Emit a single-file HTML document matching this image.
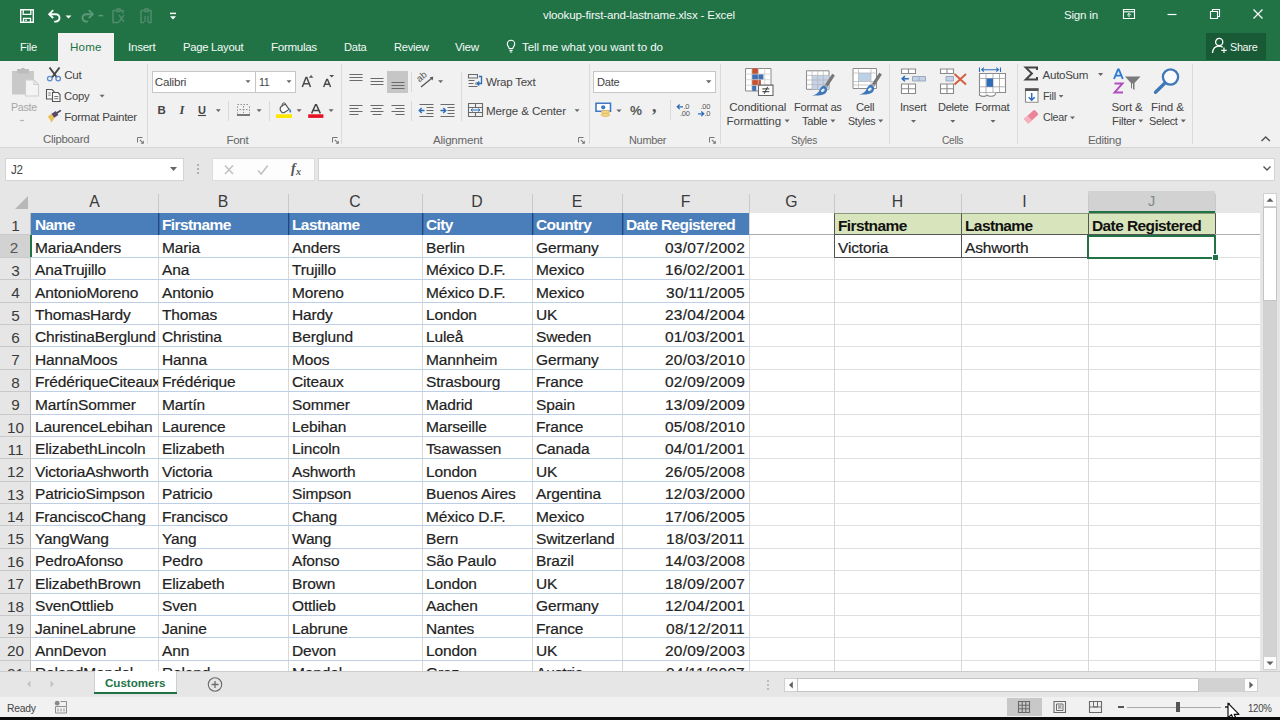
<!DOCTYPE html>
<html><head><meta charset="utf-8"><title>Excel</title>
<style>
*{box-sizing:border-box;margin:0;padding:0}
html,body{width:1280px;height:720px;overflow:hidden;background:#e6e6e6;font-family:"Liberation Sans",sans-serif;}
.abs,#app div,#app svg,#app span.a{position:absolute}
#app{position:absolute;left:0;top:0;width:1280px;height:720px;overflow:hidden}
/* title */
#green{left:0;top:0;width:1280px;height:61px;background:#217346}
.tt.hm{color:#217346}
.tt{color:#f4f9f6;font-size:11.6px;white-space:nowrap;line-height:14px}
#hometab{left:58px;top:33px;width:56px;height:29px;background:#f1f1f1}
#share{left:1206px;top:33px;width:60px;height:27px;background:#185a36}
/* ribbon */
#ribbon{left:0;top:61px;width:1280px;height:86px;background:#f1f1f1}
#ribline{left:0;top:147px;width:1280px;height:1px;background:#d6d6d6}
.rt{color:#444;font-size:11.6px;white-space:nowrap;line-height:14px}
.rt.dis{color:#a6a6a6}
.rt.j2{font-size:12.3px}
.gl{color:#666;font-size:11.6px;white-space:nowrap;line-height:14px}
.gsep{top:64px;width:1px;height:80px;background:#dadada}
.box{background:#fff;border:1px solid #c6c6c6}
/* formula bar */
#fbar{left:0;top:148px;width:1280px;height:43px;background:#e6e6e6}
/* grid */
#sheet{left:0;top:191px;width:1260px;height:480px;background:#fff;overflow:hidden}
#gridwrap{left:0;top:0;width:1280px;height:671px;overflow:hidden}
#colhdr{left:0;top:191px;width:1260px;height:22px;background:#e6e6e6}
#rowhdr{left:0;top:213px;width:31px;height:458px;background:#e6e6e6}
.ch{top:191px;height:22px;line-height:21.5px;text-align:center;font-size:15.8px;color:#3a3a3a}
.ch.sel{background:#d2d2d2;color:#7d8b84;font-size:14.5px;border-bottom:2px solid #217346}
.chsep{top:194px;width:1px;height:19px;background:#c9c9c9}
.rh{left:0;width:31px;text-align:center;font-size:15.3px;color:#3a3a3a}
.rh.sel{background:#d2d2d2;color:#555;border-right:2px solid #217346;width:32px;padding-right:2px}
.rhsep{left:0;width:31px;height:1px;background:#c9c9c9}
.hl{left:31px;width:1229px;height:1px;background:#dfdfdf}
.vl{top:213px;width:1px;height:458px;background:#d8d8d8}
.tl{height:1px;background:#bdcfe6}
.bluehdr{background:#4a7ebb}
.bsep{width:1px;background:#1f4680;box-shadow:1px 0 0 rgba(31,70,128,.35)}
.c{font-size:15.5px;color:#222;white-space:nowrap;overflow:hidden;padding-left:4px;padding-right:3px;letter-spacing:-.15px;padding-top:.5px;-webkit-text-stroke:.2px #222}
.c.r{text-align:right;letter-spacing:.25px;padding-right:4px}
.c.hb{color:#fff;-webkit-text-stroke:0;font-weight:bold;letter-spacing:-.6px;padding-top:0}
.c.gh{background:#d8e4bc;-webkit-text-stroke:0;font-weight:bold;color:#111;border:1px solid #555;border-top-color:#8a9a7c;letter-spacing:-.6px;padding-top:0;padding-left:3px}
/* bottom */
#tabbar{left:0;top:671px;width:1280px;height:26px;background:#e6e6e6;border-top:1px solid #cdcdcd}
#status{left:0;top:697px;width:1280px;height:20px;background:#f1f1f1}
.stab{color:#217346;font-weight:bold;font-size:11.6px;white-space:nowrap;line-height:14px}
.st{color:#444;font-size:10.7px;white-space:nowrap;line-height:14px}
#black{left:0;top:717px;width:1280px;height:3px;background:#0a0a0a}
</style></head><body>
<div id="app">
<div id="green"></div>
<div id="hometab"></div>
<div id="share"></div>

<!-- TITLE BAR -->
<svg style="left:18px;top:7px" width="170" height="18" viewBox="0 0 170 18" fill="none" stroke="#fff" stroke-width="1.4">
 <!-- save -->
 <path d="M2.7 2.7h12.6v12.6h-12.6z"/><path d="M5.2 2.7v4.6h7.6v-4.6" stroke-width="1.3"/><path d="M5.5 15.3v-4h7v4" stroke-width="1.3"/><path d="M7.2 13.2h1.6" stroke-width="1.6"/>
 <!-- undo -->
 <path d="M31.5 7.2h6.3a3.6 3.6 0 0 1 0 7.4h-1.6" stroke-width="1.9"/><path d="M35.2 3.2l-4 4 4 4" stroke-width="1.9"/>
 <path d="M47.5 8.4h6l-3 3z" fill="#fff" stroke="none"/>
 <!-- redo dim -->
 <g stroke="#5d9a79"><path d="M74.5 7.2h-6.3a3.6 3.6 0 0 0 0 7.4h1.6" stroke-width="1.9"/><path d="M70.8 3.2l4 4-4 4" stroke-width="1.9"/></g>
 <path d="M80.5 8.6h4.6" stroke="#5d9a79" stroke-width="1.5"/>
 <!-- dim icons -->
 <g stroke="#4f8d6c" stroke-width="1.5"><path d="M95 3.5h3m4 0h3v3M95 3.5v12h6"/><path d="M99 2h3v2.4h-3z"/><path d="M101 8l5 7m0-7l-5 7" stroke-width="1.3"/>
 <path d="M123 3.5h3m4 0h3v12h-3M123 3.5v12h3"/><path d="M127 2h3v2.4h-3z"/><path d="M127 9v6m3-6v6" stroke-width="1.3"/></g>
 <!-- customize -->
 <path d="M152 6.4h6" stroke-width="1.5"/><path d="M152 9.2h6l-3 3.2z" fill="#fff" stroke="none"/>
</svg>
<div class="tt" style="left:543px;top:8px;letter-spacing:-0.17px">vlookup-first-and-lastname.xlsx - Excel</div>
<div class="tt" style="left:1064px;top:8px;letter-spacing:-0.22px">Sign in</div>
<svg style="left:1120px;top:5px" width="150" height="18" viewBox="0 0 150 18" fill="none" stroke="#fff" stroke-width="1.1">
 <path d="M3.5 4.5h11v9h-11z"/><path d="M3.5 6.8h11" /><path d="M9 12.2v-3.6m-1.8 1.6l1.8-1.8 1.8 1.8" stroke-width="1"/>
 <path d="M47.5 9.5h9" stroke-width="1.2"/>
 <path d="M90.5 6.5h7v7h-7z"/><path d="M92.5 6.5v-2h7v7h-2"/>
 <path d="M133.5 4.5l9 9m0-9l-9 9" stroke-width="1.2"/>
</svg>
<!-- TABS -->
<div class="tt" style="left:20px;top:39.5px;letter-spacing:-0.30px;transform:scaleX(0.963);transform-origin:0 0">File</div>
<div class="tt hm" style="left:70px;top:39.5px;letter-spacing:0.16px">Home</div>
<div class="tt" style="left:128px;top:39.5px;letter-spacing:-0.27px">Insert</div>
<div class="tt" style="left:183px;top:39.5px;letter-spacing:-0.27px;transform:scaleX(0.971);transform-origin:0 0">Page Layout</div>
<div class="tt" style="left:271px;top:39.5px;letter-spacing:-0.31px">Formulas</div>
<div class="tt" style="left:344px;top:39.5px;letter-spacing:-0.30px;transform:scaleX(0.959);transform-origin:0 0">Data</div>
<div class="tt" style="left:393.5px;top:39.5px;letter-spacing:-0.28px;transform:scaleX(0.960);transform-origin:0 0">Review</div>
<div class="tt" style="left:455px;top:39.5px;letter-spacing:-0.26px">View</div>
<svg style="left:505px;top:38px" width="12" height="16" viewBox="0 0 12 16" fill="none" stroke="#fff" stroke-width="1.1"><path d="M4.2 10.5c0-1.6-1.9-2.4-1.9-4.6a3.7 3.7 0 0 1 7.4 0c0 2.2-1.9 3-1.9 4.6z"/><path d="M4.4 12.4h3.2M4.8 14h2.4"/></svg>
<div class="tt" style="left:522px;top:39.5px;letter-spacing:-0.08px">Tell me what you want to do</div>
<svg style="left:1211px;top:36px" width="18" height="18" viewBox="0 0 18 18" fill="none" stroke="#fff" stroke-width="1.300"><circle cx="8.200" cy="6" r="3.600"/><path d="M1.500 17c.4-4.400 2.800-6.800 6.500-6.800 1.500 0 2.700.4 3.700 1.100"/><path d="M13 11.500v5.500m-2.700-2.700h5.400" stroke-width="1.200"/></svg>
<div class="tt" style="left:1230px;top:39.5px;letter-spacing:-0.30px;transform:scaleX(0.929);transform-origin:0 0">Share</div>
<div id="ribbon"></div>
<div id="ribline"></div>
<!-- CLIPBOARD -->
<svg style="left:8px;top:64px" width="140" height="82" viewBox="0 0 140 82" fill="none">
 <!-- paste (disabled) -->
 <path d="M4 7h22v23.5h-22z" fill="#c9c9c9"/><path d="M9 7v-2h4a2.2 2.2 0 0 1 4 0h4v2v2.5h-12z" fill="#bdbdbd"/>
 <path d="M17.5 16h8.5l4.5 4.5v11.5h-13z" fill="#f4f4f4" stroke="#cfcfcf" stroke-width="1.1"/><path d="M26 16v4.5h4.5" stroke="#cfcfcf" stroke-width="1.1"/>
 <path d="M12 56.5h4" stroke="#b5b5b5" stroke-width="1.2"/>
 <!-- cut -->
 <path d="M41.500 3.500l7.500 10M51.500 3.500l-7.500 10" stroke="#444" stroke-width="1.900"/>
 <circle cx="41.8" cy="14.6" r="2.300" stroke="#5b8bd0" stroke-width="1.300"/><circle cx="50.2" cy="14.6" r="2.300" stroke="#5b8bd0" stroke-width="1.300"/>
 <!-- copy -->
 <path d="M38.5 25.5h5.5l2 2v7.5h-7.5z" stroke="#555" stroke-width="1.1" fill="#f8f8f8"/>
 <path d="M44.5 28.5h5.5l2 2v7h-7.5z" stroke="#555" stroke-width="1.1" fill="#f8f8f8"/>
 <path d="M46.3 32.5h4M46.3 34.7h4M40.3 29h2.4M40.3 31.2h2.4" stroke="#777" stroke-width="1"/>
 <path d="M91.6 30.8h5l-2.5 2.8z" fill="#666"/>
 <!-- format painter -->
 <path d="M47.6 48.8l4.8-3 0.9 1.3-4.8 3.1z" fill="#4b4156"/>
 <path d="M43.2 50l4.6-2.9 2.6 3.9-4.5 3z" fill="#56496a"/>
 <path d="M39.8 52.2l3.8-2.4 2.8 4.4-2.9 4.4z" fill="#e8c35a"/>
 <!-- launcher -->
 <path d="M129.5 78.5v-5h5" stroke="#777" stroke-width="1"/><path d="M131.8 75.8l3.4 3.4" stroke="#777" stroke-width="1.1"/><path d="M135.8 76.6v3.2h-3.2z" fill="#777"/>
</svg>
<div class="rt dis" style="left:10.6px;top:99.6px;letter-spacing:-0.30px;transform:scaleX(0.919);transform-origin:0 0">Paste</div>
<div class="rt" style="left:64.3px;top:67.7px;letter-spacing:-0.34px">Cut</div>
<div class="rt" style="left:64.3px;top:89px;letter-spacing:-0.29px;transform:scaleX(0.975);transform-origin:0 0">Copy</div>
<div class="rt" style="left:64.3px;top:110.2px;letter-spacing:-0.30px">Format Painter</div>
<div class="gl" style="left:43px;top:132.1px;letter-spacing:-0.27px;transform:scaleX(0.980);transform-origin:0 0">Clipboard</div>
<div class="gsep" style="left:147px"></div>

<!-- FONT -->
<div class="box" style="left:152px;top:71px;width:104px;height:22px"></div>
<div class="box" style="left:255px;top:71px;width:41px;height:22px"></div>
<div class="rt" style="left:154.8px;top:75px;letter-spacing:-0.21px">Calibri</div>
<div class="rt" style="left:259px;top:75px;letter-spacing:-0.37px;transform:scaleX(0.913);transform-origin:0 0">11</div>
<svg style="left:150px;top:64px" width="192" height="82" viewBox="0 0 192 82" fill="none">
 <path d="M95.5 16.3h5l-2.5 2.8z" fill="#666"/><path d="M136.5 16.3h5l-2.5 2.8z" fill="#666"/>
 <!-- grow / shrink font -->
 <path d="M152.300 23l3.700-9.400h.800l3.700 9.400M153.700 19.800h5.800" stroke="#4a4a4a" stroke-width="1.500"/><path d="M158.800 13.700l2.300-2.600 2.300 2.600z" fill="#555"/>
 <path d="M173.600 23l3.100-7.600h.800l3.100 7.600M174.800 20.300h4.800" stroke="#4a4a4a" stroke-width="1.400"/><path d="M179.200 10.900h5l-2.500 2.700z" fill="#555"/>
 <!-- U underline + arrows -->
 <path d="M48 51.500h8" stroke="#444" stroke-width="1.100"/>
 <path d="M65.800 45.300h5l-2.500 2.800z" fill="#666"/>
 <path d="M78.500 37v20" stroke="#dadada"/>
 <!-- borders icon -->
 <path d="M87.500 40.500h1.500m1.500 0h1.500m1.500 0h1.500m1.500 0h1.500M87.500 42.500v1.500m0 1.500v1.500m0 1.500v1M99.500 42.500v1.500m0 1.500v1.500m0 1.500v1M93.500 42v1.500m0 1.500v1.500m0 1.500v1M89.500 45.500h1.500m1.500 0h2m1.500 0h1.500" stroke="#8f8f8f" stroke-width="1"/>
 <path d="M87 51h13" stroke="#444" stroke-width="1.400"/>
 <path d="M106.600 45.300h5l-2.500 2.800z" fill="#666"/>
 <path d="M119.500 37v20" stroke="#dadada"/>
 <!-- fill color -->
 <path d="M131 42.600l4.300-2.500 3.800 5.300-4.400 2.900c-1.400.9-2.900.2-3.700-.9-.9-1.300-.9-3.700 0-4.800z" stroke="#555" stroke-width="1.100" fill="#fafafa"/>
 <path d="M132.400 42.400c-.6-2 0-3.300 1.200-3.500 1.100-.2 1.900.8 2.100 1.900" stroke="#555" stroke-width="1"/>
 <path d="M139.300 44.300c1.200 1 2.100 2.500 1.900 3.700-.2.800-1.500.8-1.700 0-.2-1.200 0-2.500-.2-3.700z" fill="#3f78c4"/>
 <path d="M126 50.300h16v3.700h-16z" fill="#ffe800"/>
 <path d="M146.600 45.300h5l-2.500 2.800z" fill="#666"/>
 <!-- font color -->
 <path d="M161.600 49.400l3.900-8.600h.9l3.900 8.600M163 46.400h6" stroke="#444" stroke-width="1.500"/>
 <path d="M158.200 50.300h15.200v3.600h-15.200z" fill="#e81123"/>
 <path d="M178.600 45.300h5l-2.500 2.800z" fill="#666"/>
 <!-- launcher -->
 <path d="M182.500 78.500v-5h5" stroke="#777" stroke-width="1"/><path d="M184.800 75.800l3.400 3.400" stroke="#777" stroke-width="1.100"/><path d="M188.800 76.600v3.200h-3.200z" fill="#777"/>
</svg>
<div class="rt" style="left:157.500px;top:103.200px;font-weight:bold;font-size:11.500px">B</div>
<div class="rt" style="left:179.500px;top:103px;font:italic bold 12.500px 'Liberation Serif',serif;line-height:14px">I</div>
<div class="rt" style="left:198px;top:102.700px;font-weight:bold;font-size:11px">U</div>
<div class="gl" style="left:226.500px;top:132.500px;letter-spacing:-0.34px">Font</div>
<div class="gsep" style="left:341px"></div>

<!-- ALIGNMENT -->
<div style="left:387px;top:71px;width:21px;height:22px;background:#c6c6c6"></div>
<svg style="left:345px;top:64px" width="244" height="82" viewBox="0 0 244 82" fill="none" stroke="#6a6a6a" stroke-width="1.100">
 <!-- vertical align -->
 <path d="M4.500 10.500h13M4.500 13.500h13M4.500 16.500h13"/>
 <path d="M25.500 14.500h13M25.500 17.500h13M25.500 20.500h13"/>
 <path d="M46.500 18.500h13M46.500 21.500h13M46.500 24.500h13"/>
 <path d="M66.500 8v20" stroke="#dadada"/>
 <!-- orientation -->
 <path d="M76 23l10.500-8.500" stroke="#555" stroke-width="1.300"/><path d="M88.300 12.800l-.7 3.800-2.900-3.300z" fill="#555" stroke="none"/>
 <text x="0" y="0" transform="translate(74.500 18.500) rotate(-40)" font-family="Liberation Sans" font-size="9.500" fill="#555" stroke="none">ab</text>
 <path d="M93.100 16.300h5l-2.500 2.800z" fill="#666" stroke="none"/>
 <!-- horizontal align -->
 <path d="M4.500 41.500h13M4.500 44.500h9M4.500 47.500h13M4.500 50.500h9"/>
 <path d="M25.500 41.500h13M27.500 44.500h9M25.500 47.500h13M27.500 50.500h9"/>
 <path d="M46.500 41.500h13M50.500 44.500h9M46.500 47.500h13M50.500 50.500h9"/>
 <path d="M66.500 37v20" stroke="#dadada"/>
 <!-- indent -->
 <path d="M74.500 40.500h14M81.500 43.500h7M81.500 46.500h7M81.500 49.500h7M74.500 52.500h14"/>
 <path d="M79.500 46.500h-5m2.200-2.400l-2.400 2.400 2.400 2.400" stroke="#2b6cb8" stroke-width="1.400"/>
 <path d="M95.500 40.500h14M102.500 43.500h7M102.500 46.500h7M102.500 49.500h7M95.500 52.500h14"/>
 <path d="M95.500 46.500h5m-2.200-2.400l2.400 2.400-2.400 2.400" stroke="#2b6cb8" stroke-width="1.400"/>
 <path d="M116.500 8v49" stroke="#dadada"/>
 <!-- wrap text -->
 <path d="M123.500 10.500h9v3.500h-9zM123.500 16.500h6M123.500 19.500h5M123.500 22.500h9"/>
 <path d="M134 12.500h2.500v7h-4m1.800-2l-2 2 2 2" stroke="#2b6cb8" stroke-width="1.300"/>
 <text x="130" y="21" font-family="Liberation Sans" font-size="6" fill="#555" stroke="none">c</text>
 <!-- merge & center -->
 <path d="M123.500 39.500h14v13h-14zM123.500 43.500h14M123.500 48.500h14M130.500 39.500v4M130.500 48.500v4"/>
 <path d="M126 46h9m-7.300-1.500l-1.700 1.500 1.700 1.500m5.600-3l1.700 1.500-1.700 1.500" stroke="#2b6cb8" stroke-width="1"/>
 <path d="M229.600 45.300h5l-2.500 2.800z" fill="#666" stroke="none"/>
 <!-- launcher -->
 <path d="M233.500 78.500v-5h5" stroke="#777" stroke-width="1"/><path d="M235.800 75.800l3.400 3.400" stroke="#777" stroke-width="1.100"/><path d="M239.800 76.600v3.200h-3.200z" fill="#777" stroke="none"/>
</svg>
<div class="rt" style="left:486px;top:75px;letter-spacing:-0.27px">Wrap Text</div>
<div class="rt" style="left:486px;top:104px;letter-spacing:-0.14px">Merge &amp; Center</div>
<div class="gl" style="left:433px;top:132.500px;letter-spacing:-0.24px">Alignment</div>
<div class="gsep" style="left:589px"></div>

<!-- NUMBER -->
<div class="box" style="left:593px;top:71px;width:123px;height:22px"></div>
<div class="rt" style="left:596.5px;top:75px;letter-spacing:-0.30px;transform:scaleX(0.959);transform-origin:0 0">Date</div>
<svg style="left:590px;top:64px" width="132" height="82" viewBox="0 0 132 82" fill="none">
 <path d="M116 16.300h5.400l-2.700 3z" fill="#666"/>
 <!-- accounting format -->
 <path d="M6 39.300h14.500v8h-14.500z" fill="#fff" stroke="#3f78c4" stroke-width="1.600"/>
 <circle cx="13.200" cy="43.300" r="2.100" fill="#3f78c4"/>
 <ellipse cx="15.500" cy="48" rx="4.300" ry="1.600" fill="#f4d58a" stroke="#e0b24f" stroke-width=".8"/>
 <ellipse cx="15.500" cy="50.800" rx="4.300" ry="1.600" fill="#f4d58a" stroke="#e0b24f" stroke-width=".8"/>
 <path d="M26.400 45.400h5.200l-2.600 2.900z" fill="#666"/>
 <path d="M80.500 36v20" stroke="#dadada"/>
 <!-- increase decimal -->
 <path d="M93 42.800h-5.500m2.200-2.300l-2.400 2.300 2.400 2.300" stroke="#2b6cb8" stroke-width="1.300"/>
 <!-- decrease decimal -->
 <path d="M108 49.800h5.500m-2.200-2.300l2.400 2.300-2.400 2.300" stroke="#2b6cb8" stroke-width="1.300"/>
 <!-- launcher -->
 <path d="M119.500 78.500v-5h5" stroke="#777" stroke-width="1"/><path d="M121.800 75.800l3.400 3.400" stroke="#777" stroke-width="1.100"/><path d="M125.800 76.600v3.200h-3.200z" fill="#777"/>
</svg>
<div class="rt" style="left:630px;top:103px;font-size:13.500px;font-weight:bold;line-height:16px;color:#5a5a5a;letter-spacing:-.5px">%</div>
<div class="rt" style="left:652px;top:96px;font:bold 18px 'Liberation Serif',serif;line-height:20px;color:#555">,</div>
<div class="rt" style="left:683.500px;top:102.500px;font-size:7.500px;line-height:8px;color:#555;letter-spacing:-.3px">.0</div>
<div class="rt" style="left:680px;top:109.500px;font-size:7.500px;line-height:8px;color:#555;letter-spacing:-.3px">.00</div>
<div class="rt" style="left:700.500px;top:102.500px;font-size:7.500px;line-height:8px;color:#555;letter-spacing:-.3px">.00</div>
<div class="rt" style="left:704.500px;top:109.500px;font-size:7.500px;line-height:8px;color:#555;letter-spacing:-.3px">.0</div>
<div class="gl" style="left:628.700px;top:132.500px;letter-spacing:-0.29px;transform:scaleX(0.941);transform-origin:0 0">Number</div>
<div class="gsep" style="left:720px"></div>

<!-- STYLES -->
<svg style="left:724px;top:64px" width="164" height="82" viewBox="0 0 164 82" fill="none">
 <!-- conditional formatting -->
 <path d="M21.500 4.500h25.500v22.500h-25.500z" fill="#fff" stroke="#8a8a8a" stroke-width="1"/>
 <path d="M27.900 4.500h6.400v5.600h-6.400z" fill="#c8502f"/>
 <path d="M27.900 10.100h11.500v5.600h-11.500z" fill="#3f6fb5"/>
 <path d="M27.900 15.700h9v5.600h-9z" fill="#c8502f"/>
 <path d="M27.900 21.300h4.400v5.600h-4.400z" fill="#3f6fb5"/>
 <path d="M27.900 4.500v22.500M34.300 4.500v22.500M40.700 4.500v22.500M21.500 10.100h25.500M21.500 15.700h25.500M21.500 21.300h25.500" stroke="#c9c9c9" stroke-width=".7"/>
 <path d="M34.500 21.100h14.500v10.400h-14.500z" fill="#fff" stroke="#666" stroke-width="1.100"/>
 <path d="M38.300 24.900h7M38.300 27.700h7M43.600 22.800l-3.400 7" stroke="#333" stroke-width="1"/>
 <path d="M60.600 55.600h5l-2.500 2.900z" fill="#666"/>
 <!-- format as table -->
 <path d="M82.500 6.800h22.500v18.500h-22.500z" fill="#fff" stroke="#8a8a8a" stroke-width="1"/>
 <path d="M88 11.400h17v13.900h-17z" fill="#c5d3e8"/>
 <path d="M88 6.800v18.500M93.700 6.800v18.500M99.300 6.800v18.500M82.500 11.400h22.500M82.500 16h22.500M82.500 20.600h22.500" stroke="#b3b3b3" stroke-width=".7"/>
 <path d="M108.3 9.8l2.600 1.800-7.600 11.600-2.700-1.900z" fill="#777"/>
 <path d="M101.2 20.5l3 2.100-1 1.500-3-2.100z" fill="#a9a9a9"/>
 <path d="M100.3 21.8c2.600 1.300 3.800 3.800 2 6.400-2.400 3.300-8.200 3.600-14.300 3.300 4.200-.9 6.300-2.800 7.600-5.600 1.100-2.400 2.600-4.400 4.700-4.100z" fill="#3f78b8"/>
 <ellipse cx="98.8" cy="26.3" rx="2.100" ry="1.400" fill="#e2ebf6" transform="rotate(-35 98.8 26.3)"/>
 <path d="M106.400 55.600h5l-2.500 2.900z" fill="#666"/>
 <!-- cell styles -->
 <path d="M129 4.500h23.500v20h-23.500z" fill="#fff" stroke="#8a8a8a" stroke-width="1"/>
 <path d="M134.500 9h12.500v8.500h-12.500z" fill="#bcd0e6"/>
 <path d="M134.500 4.500v20M147 4.500v20M129 9h23.500M129 17.500h23.500M129 21h23.500" stroke="#b3b3b3" stroke-width=".7"/>
 <path d="M155.3 8.8l2.600 1.800-7.600 11.600-2.700-1.900z" fill="#777"/>
 <path d="M148.2 19.5l3 2.100-1 1.500-3-2.100z" fill="#a9a9a9"/>
 <path d="M147.3 20.8c2.600 1.300 3.800 3.800 2 6.400-2.400 3.300-8.200 3.600-14.300 3.300 4.200-.9 6.300-2.800 7.600-5.600 1.100-2.400 2.600-4.400 4.700-4.100z" fill="#3f78b8"/>
 <ellipse cx="145.8" cy="25.3" rx="2.100" ry="1.400" fill="#e2ebf6" transform="rotate(-35 145.8 25.3)"/>
 <path d="M154.200 55.600h5l-2.500 2.900z" fill="#666"/>
</svg>
<div class="rt" style="left:729.300px;top:99.500px;letter-spacing:-0.10px">Conditional</div>
<div class="rt" style="left:726.600px;top:113.600px;letter-spacing:-0.10px">Formatting</div>
<div class="rt" style="left:794.400px;top:99.500px;letter-spacing:-0.28px;transform:scaleX(0.959);transform-origin:0 0">Format as</div>
<div class="rt" style="left:802.300px;top:113.600px;letter-spacing:-0.29px;transform:scaleX(0.958);transform-origin:0 0">Table</div>
<div class="rt" style="left:855.700px;top:99.500px;letter-spacing:-0.30px;transform:scaleX(0.966);transform-origin:0 0">Cell</div>
<div class="rt" style="left:847.500px;top:113.600px;letter-spacing:-0.30px;transform:scaleX(0.918);transform-origin:0 0">Styles</div>
<div class="gl" style="left:791.400px;top:132.500px;letter-spacing:-0.31px;transform:scaleX(0.877);transform-origin:0 0">Styles</div>
<div class="gsep" style="left:889px"></div>

<!-- CELLS -->
<svg style="left:892px;top:64px" width="124" height="82" viewBox="0 0 124 82" fill="none">
 <!-- insert -->
 <path d="M9.500 5h14v4.500h-14zM16.500 5v4.500" fill="#fff" stroke="#8a8a8a" stroke-width="1.100"/>
 <path d="M20.500 12.500h13v4.500h-13z" fill="#c5d3e8" stroke="#9aa9bd" stroke-width="1"/><path d="M27 12.500v4.500" stroke="#9aa9bd"/>
 <path d="M16.800 14.700h-6.500m2.600-2.600l-2.700 2.600 2.700 2.600" stroke="#2b6cb8" stroke-width="1.500"/>
 <path d="M9.500 20h14v9.500h-14zM16.500 20v9.500M9.500 24.700h14" fill="#fff" stroke="#8a8a8a" stroke-width="1.100"/>
 <path d="M19 56h5l-2.500 2.800z" fill="#666"/>
 <!-- delete -->
 <path d="M48.500 5h13v4.500h-13zM55 5v4.500" fill="#fff" stroke="#8a8a8a" stroke-width="1.100"/>
 <path d="M54 12.500h7.500v4.500h-7.500z" fill="#c5d3e8" stroke="#9aa9bd" stroke-width="1"/>
 <path d="M48.500 20h13v9.500h-13zM55 20v9.500M48.500 24.700h13" fill="#fff" stroke="#8a8a8a" stroke-width="1.100"/>
 <path d="M62.500 10l11.500 10.500M74 10l-11.500 10.500" stroke="#d4603f" stroke-width="2"/>
 <path d="M58.300 56h5l-2.500 2.800z" fill="#666"/>
 <!-- format -->
 <path d="M87.500 3.500v4.500M108.500 3.500v4.500" stroke="#2b6cb8" stroke-width="1.100"/>
 <path d="M89.500 5.700h17m-14.600-2l-2.200 2 2.200 2m12.400-4l2.200 2-2.200 2" stroke="#2b6cb8" stroke-width="1.100"/>
 <path d="M87.500 9.500h26v19h-9.500l-1.300 2.700c-2.500 1.400-5.200 1.400-7.400 0-2.400 1.400-5.400 1.400-7.800 0z" fill="#fff" stroke="#8a8a8a" stroke-width="1.100"/>
 <path d="M94 9.500v21M101 9.500v19M107.500 9.500v19M87.500 14.500h26M87.500 22.800h26M87.500 28.500h17" stroke="#a9a9a9" stroke-width=".9"/>
 <path d="M94.500 14.500h6.500v8.300h-6.500z" fill="#2f6db8"/>
 <path d="M98.500 56h5l-2.500 2.800z" fill="#666"/>
</svg>
<div class="rt" style="left:899.800px;top:99.500px;letter-spacing:-0.28px;transform:scaleX(0.969);transform-origin:0 0">Insert</div>
<div class="rt" style="left:937.600px;top:99.500px;letter-spacing:-0.29px;transform:scaleX(0.952);transform-origin:0 0">Delete</div>
<div class="rt" style="left:975px;top:99.500px;letter-spacing:-0.28px;transform:scaleX(0.983);transform-origin:0 0">Format</div>
<div class="gl" style="left:942.300px;top:132.500px;letter-spacing:-0.32px;transform:scaleX(0.875);transform-origin:0 0">Cells</div>
<div class="gsep" style="left:1017px"></div>

<!-- EDITING -->
<svg style="left:1020px;top:64px" width="172" height="82" viewBox="0 0 172 82" fill="none">
 <!-- sigma -->
 <path d="M17 5.900v-2.300h-11.200l6.100 5.900-6.100 6h11.200v-2.400" stroke="#444" stroke-width="2" stroke-linejoin="miter"/>
 <path d="M78 9h5.200l-2.600 2.900z" fill="#666"/>
 <!-- fill -->
 <path d="M5.500 24.800h12.500v13.500h-12.500z" fill="#fff" stroke="#8a8a8a" stroke-width="1.100"/>
 <path d="M5 24.300h13.500v2.700h-13.500z" fill="#555"/>
 <path d="M11.700 29v7m-3-2.800l3 3 3-3" stroke="#2b6cb8" stroke-width="1.500"/>
 <path d="M38.800 31h4.600l-2.300 2.700z" fill="#666"/>
 <!-- clear -->
 <g transform="rotate(-42 11.300 52.600)"><rect x="4.300" y="49.400" width="14" height="6.400" rx="1" fill="#ec8398"/><rect x="4.300" y="49.400" width="5" height="6.400" rx="1" fill="#f4b3bf"/></g>
 <path d="M50 52.500h5l-2.500 2.800z" fill="#666"/>
 <!-- sort & filter -->
 <path d="M94 15l4-9.500h.8l4 9.500M95.600 11.600h5.600" stroke="#2b7cd0" stroke-width="1.900"/>
 <path d="M94.500 19.500h8l-8 9h8.500" stroke="#b24fc0" stroke-width="1.900"/>
 <path d="M105 12.500h15.500l-6 6.500v6.800l-3.500 -1.600v-5.200z" fill="#7a7a7a"/>
 <path d="M112.500 19.500v5.500" stroke="#f1f1f1" stroke-width="1"/>
 <path d="M118.300 55.600h5l-2.500 2.900z" fill="#666"/>
 <!-- find & select -->
 <circle cx="150.500" cy="13" r="7.600" fill="#fbfbfb" stroke="#3f78b8" stroke-width="2.300"/>
 <path d="M145 19l-9.500 9.300" stroke="#3f78b8" stroke-width="3.300" stroke-linecap="round"/>
 <path d="M160.800 55.600h5l-2.500 2.900z" fill="#666"/>
</svg>
<div class="rt" style="left:1042.600px;top:67.800px;letter-spacing:-0.32px">AutoSum</div>
<div class="rt" style="left:1042.600px;top:89px;letter-spacing:-0.30px;transform:scaleX(0.938);transform-origin:0 0">Fill</div>
<div class="rt" style="left:1042.600px;top:110.200px;letter-spacing:-0.30px;transform:scaleX(0.925);transform-origin:0 0">Clear</div>
<div class="rt" style="left:1111.600px;top:99.500px;letter-spacing:-0.24px">Sort &amp;</div>
<div class="rt" style="left:1111.600px;top:113.600px;letter-spacing:-0.28px;transform:scaleX(0.978);transform-origin:0 0">Filter</div>
<div class="rt" style="left:1151px;top:99.500px;letter-spacing:-0.11px">Find &amp;</div>
<div class="rt" style="left:1149px;top:113.600px;letter-spacing:-0.29px;transform:scaleX(0.937);transform-origin:0 0">Select</div>
<div class="gl" style="left:1087.900px;top:132.500px;letter-spacing:-0.33px">Editing</div>
<div class="gsep" style="left:1192px"></div>
<svg style="left:1260px;top:135px" width="12" height="8" viewBox="0 0 12 8" fill="none" stroke="#555" stroke-width="1.500"><path d="M1.500 6l4.200-4 4.200 4"/></svg>

<div id="fbar"></div>
<!-- FORMULA BAR -->
<div class="box" style="left:5px;top:158px;width:179px;height:23px;border-color:#d4d4d4"></div>
<div class="rt j2" style="left:11px;top:162.8px;letter-spacing:-0.35px;transform:scaleX(0.942);transform-origin:0 0">J2</div>
<svg style="left:170px;top:167px" width="8" height="5" viewBox="0 0 8 5"><path d="M0 0h7l-3.5 4z" fill="#666"/></svg>
<div style="left:197px;top:164px;width:2px;height:2px;background:#b0b0b0"></div>
<div style="left:197px;top:168px;width:2px;height:2px;background:#b0b0b0"></div>
<div style="left:197px;top:172px;width:2px;height:2px;background:#b0b0b0"></div>
<div class="box" style="left:212px;top:158px;width:103px;height:23px;border-color:#dcdcdc;background:#fdfdfd"></div>
<svg style="left:222px;top:162px" width="90" height="16" viewBox="0 0 90 16" fill="none" stroke="#c2c2c2" stroke-width="1.6">
 <path d="M3 3.5l8 8.5m0-8.5l-8 8.5"/><path d="M36 8.5l3.2 3.5 6.5-8.5"/>
</svg>
<div style="left:291px;top:161px;font:italic bold 14px 'Liberation Serif',serif;color:#555;line-height:16px">f</div>
<div style="left:296px;top:166px;font:italic bold 10px 'Liberation Serif',serif;color:#555;line-height:12px">x</div>
<div class="box" style="left:318px;top:158px;width:957px;height:23px;border-color:#d4d4d4"></div>
<svg style="left:1262px;top:165px" width="10" height="8" viewBox="0 0 10 8" fill="none" stroke="#555" stroke-width="1.4"><path d="M1.5 1.5l3.5 3.5 3.5-3.5"/></svg>

<div id="gridwrap">
<div id="sheet"></div>
<div id="colhdr"></div>
<div id="rowhdr"></div>
<div style="left:30px;top:213px;width:1px;height:458px;background:#bcbcbc"></div>
<div class="ch" style="left:31px;width:127px">A</div>
<div class="ch" style="left:158px;width:130px">B</div>
<div class="ch" style="left:288px;width:134px">C</div>
<div class="ch" style="left:422px;width:110px">D</div>
<div class="ch" style="left:532px;width:90px">E</div>
<div class="ch" style="left:622px;width:127px">F</div>
<div class="ch" style="left:749px;width:85px">G</div>
<div class="ch" style="left:834px;width:127px">H</div>
<div class="ch" style="left:961px;width:127px">I</div>
<div class="ch sel" style="left:1088px;width:127px">J</div>
<div class="chsep" style="left:157.5px"></div>
<div class="chsep" style="left:287.5px"></div>
<div class="chsep" style="left:421.5px"></div>
<div class="chsep" style="left:531.5px"></div>
<div class="chsep" style="left:621.5px"></div>
<div class="chsep" style="left:748.5px"></div>
<div class="chsep" style="left:833.5px"></div>
<div class="chsep" style="left:960.5px"></div>
<div class="chsep" style="left:1087.5px"></div>
<div class="chsep" style="left:1214.5px"></div>
<div class="rh" style="top:213.00px;height:22.39px;line-height:25.19px">1</div>
<div class="rhsep" style="top:234.39px"></div>
<div class="rh sel" style="top:235.39px;height:22.39px;line-height:25.19px">2</div>
<div class="rhsep" style="top:256.78px"></div>
<div class="rh" style="top:257.78px;height:22.39px;line-height:25.19px">3</div>
<div class="rhsep" style="top:279.17px"></div>
<div class="rh" style="top:280.17px;height:22.39px;line-height:25.19px">4</div>
<div class="rhsep" style="top:301.56px"></div>
<div class="rh" style="top:302.56px;height:22.39px;line-height:25.19px">5</div>
<div class="rhsep" style="top:323.95px"></div>
<div class="rh" style="top:324.95px;height:22.39px;line-height:25.19px">6</div>
<div class="rhsep" style="top:346.34px"></div>
<div class="rh" style="top:347.34px;height:22.39px;line-height:25.19px">7</div>
<div class="rhsep" style="top:368.73px"></div>
<div class="rh" style="top:369.73px;height:22.39px;line-height:25.19px">8</div>
<div class="rhsep" style="top:391.12px"></div>
<div class="rh" style="top:392.12px;height:22.39px;line-height:25.19px">9</div>
<div class="rhsep" style="top:413.51px"></div>
<div class="rh" style="top:414.51px;height:22.39px;line-height:25.19px">10</div>
<div class="rhsep" style="top:435.90px"></div>
<div class="rh" style="top:436.90px;height:22.39px;line-height:25.19px">11</div>
<div class="rhsep" style="top:458.29px"></div>
<div class="rh" style="top:459.29px;height:22.39px;line-height:25.19px">12</div>
<div class="rhsep" style="top:480.68px"></div>
<div class="rh" style="top:481.68px;height:22.39px;line-height:25.19px">13</div>
<div class="rhsep" style="top:503.07px"></div>
<div class="rh" style="top:504.07px;height:22.39px;line-height:25.19px">14</div>
<div class="rhsep" style="top:525.46px"></div>
<div class="rh" style="top:526.46px;height:22.39px;line-height:25.19px">15</div>
<div class="rhsep" style="top:547.85px"></div>
<div class="rh" style="top:548.85px;height:22.39px;line-height:25.19px">16</div>
<div class="rhsep" style="top:570.24px"></div>
<div class="rh" style="top:571.24px;height:22.39px;line-height:25.19px">17</div>
<div class="rhsep" style="top:592.63px"></div>
<div class="rh" style="top:593.63px;height:22.39px;line-height:25.19px">18</div>
<div class="rhsep" style="top:615.02px"></div>
<div class="rh" style="top:616.02px;height:22.39px;line-height:25.19px">19</div>
<div class="rhsep" style="top:637.41px"></div>
<div class="rh" style="top:638.41px;height:22.39px;line-height:25.19px">20</div>
<div class="rhsep" style="top:659.80px"></div>
<div class="rh" style="top:660.80px;height:22.39px;line-height:25.19px">21</div>
<div class="rhsep" style="top:682.19px"></div>
<div class="hl" style="top:234.39px"></div>
<div class="hl" style="top:256.78px"></div>
<div class="hl" style="top:279.17px"></div>
<div class="hl" style="top:301.56px"></div>
<div class="hl" style="top:323.95px"></div>
<div class="hl" style="top:346.34px"></div>
<div class="hl" style="top:368.73px"></div>
<div class="hl" style="top:391.12px"></div>
<div class="hl" style="top:413.51px"></div>
<div class="hl" style="top:435.90px"></div>
<div class="hl" style="top:458.29px"></div>
<div class="hl" style="top:480.68px"></div>
<div class="hl" style="top:503.07px"></div>
<div class="hl" style="top:525.46px"></div>
<div class="hl" style="top:547.85px"></div>
<div class="hl" style="top:570.24px"></div>
<div class="hl" style="top:592.63px"></div>
<div class="hl" style="top:615.02px"></div>
<div class="hl" style="top:637.41px"></div>
<div class="hl" style="top:659.80px"></div>
<div class="hl" style="top:682.19px"></div>
<div class="vl" style="left:157.5px"></div>
<div class="vl" style="left:287.5px"></div>
<div class="vl" style="left:421.5px"></div>
<div class="vl" style="left:531.5px"></div>
<div class="vl" style="left:621.5px"></div>
<div class="vl" style="left:748.5px"></div>
<div class="vl" style="left:833.5px"></div>
<div class="vl" style="left:960.5px"></div>
<div class="vl" style="left:1087.5px"></div>
<div class="vl" style="left:1214.5px"></div>
<div class="vl" style="left:1259.5px"></div>
<div class="bluehdr" style="left:31px;top:213.00px;width:718px;height:22.39px"></div>
<div class="bsep" style="left:157.5px;top:213.00px;height:22.39px"></div>
<div class="bsep" style="left:287.5px;top:213.00px;height:22.39px"></div>
<div class="bsep" style="left:421.5px;top:213.00px;height:22.39px"></div>
<div class="bsep" style="left:531.5px;top:213.00px;height:22.39px"></div>
<div class="bsep" style="left:621.5px;top:213.00px;height:22.39px"></div>
<div class="tl" style="top:256.78px;left:31px;width:718px"></div>
<div class="tl" style="top:279.17px;left:31px;width:718px"></div>
<div class="tl" style="top:301.56px;left:31px;width:718px"></div>
<div class="tl" style="top:323.95px;left:31px;width:718px"></div>
<div class="tl" style="top:346.34px;left:31px;width:718px"></div>
<div class="tl" style="top:368.73px;left:31px;width:718px"></div>
<div class="tl" style="top:391.12px;left:31px;width:718px"></div>
<div class="tl" style="top:413.51px;left:31px;width:718px"></div>
<div class="tl" style="top:435.90px;left:31px;width:718px"></div>
<div class="tl" style="top:458.29px;left:31px;width:718px"></div>
<div class="tl" style="top:480.68px;left:31px;width:718px"></div>
<div class="tl" style="top:503.07px;left:31px;width:718px"></div>
<div class="tl" style="top:525.46px;left:31px;width:718px"></div>
<div class="tl" style="top:547.85px;left:31px;width:718px"></div>
<div class="tl" style="top:570.24px;left:31px;width:718px"></div>
<div class="tl" style="top:592.63px;left:31px;width:718px"></div>
<div class="tl" style="top:615.02px;left:31px;width:718px"></div>
<div class="tl" style="top:637.41px;left:31px;width:718px"></div>
<div class="tl" style="top:659.80px;left:31px;width:718px"></div>
<div class="tl" style="top:682.19px;left:31px;width:718px"></div>
<div class="c hb" style="left:31px;top:213.00px;width:127px;height:22.39px;line-height:23.39px"><span>Name</span></div>
<div class="c hb" style="left:158px;top:213.00px;width:130px;height:22.39px;line-height:23.39px"><span>Firstname</span></div>
<div class="c hb" style="left:288px;top:213.00px;width:134px;height:22.39px;line-height:23.39px"><span>Lastname</span></div>
<div class="c hb" style="left:422px;top:213.00px;width:110px;height:22.39px;line-height:23.39px"><span>City</span></div>
<div class="c hb" style="left:532px;top:213.00px;width:90px;height:22.39px;line-height:23.39px"><span>Country</span></div>
<div class="c hb" style="left:622px;top:213.00px;width:127px;height:22.39px;line-height:23.39px"><span>Date Registered</span></div>
<div class="c" style="left:31px;top:235.39px;width:127px;height:22.39px;line-height:23.39px"><span>MariaAnders</span></div>
<div class="c" style="left:158px;top:235.39px;width:130px;height:22.39px;line-height:23.39px"><span>Maria</span></div>
<div class="c" style="left:288px;top:235.39px;width:134px;height:22.39px;line-height:23.39px"><span>Anders</span></div>
<div class="c" style="left:422px;top:235.39px;width:110px;height:22.39px;line-height:23.39px"><span>Berlin</span></div>
<div class="c" style="left:532px;top:235.39px;width:90px;height:22.39px;line-height:23.39px"><span>Germany</span></div>
<div class="c r" style="left:622px;top:235.39px;width:127px;height:22.39px;line-height:23.39px"><span>03/07/2002</span></div>
<div class="c" style="left:31px;top:257.78px;width:127px;height:22.39px;line-height:23.39px"><span>AnaTrujillo</span></div>
<div class="c" style="left:158px;top:257.78px;width:130px;height:22.39px;line-height:23.39px"><span>Ana</span></div>
<div class="c" style="left:288px;top:257.78px;width:134px;height:22.39px;line-height:23.39px"><span>Trujillo</span></div>
<div class="c" style="left:422px;top:257.78px;width:110px;height:22.39px;line-height:23.39px"><span>México D.F.</span></div>
<div class="c" style="left:532px;top:257.78px;width:90px;height:22.39px;line-height:23.39px"><span>Mexico</span></div>
<div class="c r" style="left:622px;top:257.78px;width:127px;height:22.39px;line-height:23.39px"><span>16/02/2001</span></div>
<div class="c" style="left:31px;top:280.17px;width:127px;height:22.39px;line-height:23.39px"><span>AntonioMoreno</span></div>
<div class="c" style="left:158px;top:280.17px;width:130px;height:22.39px;line-height:23.39px"><span>Antonio</span></div>
<div class="c" style="left:288px;top:280.17px;width:134px;height:22.39px;line-height:23.39px"><span>Moreno</span></div>
<div class="c" style="left:422px;top:280.17px;width:110px;height:22.39px;line-height:23.39px"><span>México D.F.</span></div>
<div class="c" style="left:532px;top:280.17px;width:90px;height:22.39px;line-height:23.39px"><span>Mexico</span></div>
<div class="c r" style="left:622px;top:280.17px;width:127px;height:22.39px;line-height:23.39px"><span>30/11/2005</span></div>
<div class="c" style="left:31px;top:302.56px;width:127px;height:22.39px;line-height:23.39px"><span>ThomasHardy</span></div>
<div class="c" style="left:158px;top:302.56px;width:130px;height:22.39px;line-height:23.39px"><span>Thomas</span></div>
<div class="c" style="left:288px;top:302.56px;width:134px;height:22.39px;line-height:23.39px"><span>Hardy</span></div>
<div class="c" style="left:422px;top:302.56px;width:110px;height:22.39px;line-height:23.39px"><span>London</span></div>
<div class="c" style="left:532px;top:302.56px;width:90px;height:22.39px;line-height:23.39px"><span>UK</span></div>
<div class="c r" style="left:622px;top:302.56px;width:127px;height:22.39px;line-height:23.39px"><span>23/04/2004</span></div>
<div class="c" style="left:31px;top:324.95px;width:127px;height:22.39px;line-height:23.39px"><span>ChristinaBerglund</span></div>
<div class="c" style="left:158px;top:324.95px;width:130px;height:22.39px;line-height:23.39px"><span>Christina</span></div>
<div class="c" style="left:288px;top:324.95px;width:134px;height:22.39px;line-height:23.39px"><span>Berglund</span></div>
<div class="c" style="left:422px;top:324.95px;width:110px;height:22.39px;line-height:23.39px"><span>Luleå</span></div>
<div class="c" style="left:532px;top:324.95px;width:90px;height:22.39px;line-height:23.39px"><span>Sweden</span></div>
<div class="c r" style="left:622px;top:324.95px;width:127px;height:22.39px;line-height:23.39px"><span>01/03/2001</span></div>
<div class="c" style="left:31px;top:347.34px;width:127px;height:22.39px;line-height:23.39px"><span>HannaMoos</span></div>
<div class="c" style="left:158px;top:347.34px;width:130px;height:22.39px;line-height:23.39px"><span>Hanna</span></div>
<div class="c" style="left:288px;top:347.34px;width:134px;height:22.39px;line-height:23.39px"><span>Moos</span></div>
<div class="c" style="left:422px;top:347.34px;width:110px;height:22.39px;line-height:23.39px"><span>Mannheim</span></div>
<div class="c" style="left:532px;top:347.34px;width:90px;height:22.39px;line-height:23.39px"><span>Germany</span></div>
<div class="c r" style="left:622px;top:347.34px;width:127px;height:22.39px;line-height:23.39px"><span>20/03/2010</span></div>
<div class="c" style="left:31px;top:369.73px;width:127px;height:22.39px;line-height:23.39px"><span>FrédériqueCiteaux</span></div>
<div class="c" style="left:158px;top:369.73px;width:130px;height:22.39px;line-height:23.39px"><span>Frédérique</span></div>
<div class="c" style="left:288px;top:369.73px;width:134px;height:22.39px;line-height:23.39px"><span>Citeaux</span></div>
<div class="c" style="left:422px;top:369.73px;width:110px;height:22.39px;line-height:23.39px"><span>Strasbourg</span></div>
<div class="c" style="left:532px;top:369.73px;width:90px;height:22.39px;line-height:23.39px"><span>France</span></div>
<div class="c r" style="left:622px;top:369.73px;width:127px;height:22.39px;line-height:23.39px"><span>02/09/2009</span></div>
<div class="c" style="left:31px;top:392.12px;width:127px;height:22.39px;line-height:23.39px"><span>MartínSommer</span></div>
<div class="c" style="left:158px;top:392.12px;width:130px;height:22.39px;line-height:23.39px"><span>Martín</span></div>
<div class="c" style="left:288px;top:392.12px;width:134px;height:22.39px;line-height:23.39px"><span>Sommer</span></div>
<div class="c" style="left:422px;top:392.12px;width:110px;height:22.39px;line-height:23.39px"><span>Madrid</span></div>
<div class="c" style="left:532px;top:392.12px;width:90px;height:22.39px;line-height:23.39px"><span>Spain</span></div>
<div class="c r" style="left:622px;top:392.12px;width:127px;height:22.39px;line-height:23.39px"><span>13/09/2009</span></div>
<div class="c" style="left:31px;top:414.51px;width:127px;height:22.39px;line-height:23.39px"><span>LaurenceLebihan</span></div>
<div class="c" style="left:158px;top:414.51px;width:130px;height:22.39px;line-height:23.39px"><span>Laurence</span></div>
<div class="c" style="left:288px;top:414.51px;width:134px;height:22.39px;line-height:23.39px"><span>Lebihan</span></div>
<div class="c" style="left:422px;top:414.51px;width:110px;height:22.39px;line-height:23.39px"><span>Marseille</span></div>
<div class="c" style="left:532px;top:414.51px;width:90px;height:22.39px;line-height:23.39px"><span>France</span></div>
<div class="c r" style="left:622px;top:414.51px;width:127px;height:22.39px;line-height:23.39px"><span>05/08/2010</span></div>
<div class="c" style="left:31px;top:436.90px;width:127px;height:22.39px;line-height:23.39px"><span>ElizabethLincoln</span></div>
<div class="c" style="left:158px;top:436.90px;width:130px;height:22.39px;line-height:23.39px"><span>Elizabeth</span></div>
<div class="c" style="left:288px;top:436.90px;width:134px;height:22.39px;line-height:23.39px"><span>Lincoln</span></div>
<div class="c" style="left:422px;top:436.90px;width:110px;height:22.39px;line-height:23.39px"><span>Tsawassen</span></div>
<div class="c" style="left:532px;top:436.90px;width:90px;height:22.39px;line-height:23.39px"><span>Canada</span></div>
<div class="c r" style="left:622px;top:436.90px;width:127px;height:22.39px;line-height:23.39px"><span>04/01/2001</span></div>
<div class="c" style="left:31px;top:459.29px;width:127px;height:22.39px;line-height:23.39px"><span>VictoriaAshworth</span></div>
<div class="c" style="left:158px;top:459.29px;width:130px;height:22.39px;line-height:23.39px"><span>Victoria</span></div>
<div class="c" style="left:288px;top:459.29px;width:134px;height:22.39px;line-height:23.39px"><span>Ashworth</span></div>
<div class="c" style="left:422px;top:459.29px;width:110px;height:22.39px;line-height:23.39px"><span>London</span></div>
<div class="c" style="left:532px;top:459.29px;width:90px;height:22.39px;line-height:23.39px"><span>UK</span></div>
<div class="c r" style="left:622px;top:459.29px;width:127px;height:22.39px;line-height:23.39px"><span>26/05/2008</span></div>
<div class="c" style="left:31px;top:481.68px;width:127px;height:22.39px;line-height:23.39px"><span>PatricioSimpson</span></div>
<div class="c" style="left:158px;top:481.68px;width:130px;height:22.39px;line-height:23.39px"><span>Patricio</span></div>
<div class="c" style="left:288px;top:481.68px;width:134px;height:22.39px;line-height:23.39px"><span>Simpson</span></div>
<div class="c" style="left:422px;top:481.68px;width:110px;height:22.39px;line-height:23.39px"><span>Buenos Aires</span></div>
<div class="c" style="left:532px;top:481.68px;width:90px;height:22.39px;line-height:23.39px"><span>Argentina</span></div>
<div class="c r" style="left:622px;top:481.68px;width:127px;height:22.39px;line-height:23.39px"><span>12/03/2000</span></div>
<div class="c" style="left:31px;top:504.07px;width:127px;height:22.39px;line-height:23.39px"><span>FranciscoChang</span></div>
<div class="c" style="left:158px;top:504.07px;width:130px;height:22.39px;line-height:23.39px"><span>Francisco</span></div>
<div class="c" style="left:288px;top:504.07px;width:134px;height:22.39px;line-height:23.39px"><span>Chang</span></div>
<div class="c" style="left:422px;top:504.07px;width:110px;height:22.39px;line-height:23.39px"><span>México D.F.</span></div>
<div class="c" style="left:532px;top:504.07px;width:90px;height:22.39px;line-height:23.39px"><span>Mexico</span></div>
<div class="c r" style="left:622px;top:504.07px;width:127px;height:22.39px;line-height:23.39px"><span>17/06/2005</span></div>
<div class="c" style="left:31px;top:526.46px;width:127px;height:22.39px;line-height:23.39px"><span>YangWang</span></div>
<div class="c" style="left:158px;top:526.46px;width:130px;height:22.39px;line-height:23.39px"><span>Yang</span></div>
<div class="c" style="left:288px;top:526.46px;width:134px;height:22.39px;line-height:23.39px"><span>Wang</span></div>
<div class="c" style="left:422px;top:526.46px;width:110px;height:22.39px;line-height:23.39px"><span>Bern</span></div>
<div class="c" style="left:532px;top:526.46px;width:90px;height:22.39px;line-height:23.39px"><span>Switzerland</span></div>
<div class="c r" style="left:622px;top:526.46px;width:127px;height:22.39px;line-height:23.39px"><span>18/03/2011</span></div>
<div class="c" style="left:31px;top:548.85px;width:127px;height:22.39px;line-height:23.39px"><span>PedroAfonso</span></div>
<div class="c" style="left:158px;top:548.85px;width:130px;height:22.39px;line-height:23.39px"><span>Pedro</span></div>
<div class="c" style="left:288px;top:548.85px;width:134px;height:22.39px;line-height:23.39px"><span>Afonso</span></div>
<div class="c" style="left:422px;top:548.85px;width:110px;height:22.39px;line-height:23.39px"><span>São Paulo</span></div>
<div class="c" style="left:532px;top:548.85px;width:90px;height:22.39px;line-height:23.39px"><span>Brazil</span></div>
<div class="c r" style="left:622px;top:548.85px;width:127px;height:22.39px;line-height:23.39px"><span>14/03/2008</span></div>
<div class="c" style="left:31px;top:571.24px;width:127px;height:22.39px;line-height:23.39px"><span>ElizabethBrown</span></div>
<div class="c" style="left:158px;top:571.24px;width:130px;height:22.39px;line-height:23.39px"><span>Elizabeth</span></div>
<div class="c" style="left:288px;top:571.24px;width:134px;height:22.39px;line-height:23.39px"><span>Brown</span></div>
<div class="c" style="left:422px;top:571.24px;width:110px;height:22.39px;line-height:23.39px"><span>London</span></div>
<div class="c" style="left:532px;top:571.24px;width:90px;height:22.39px;line-height:23.39px"><span>UK</span></div>
<div class="c r" style="left:622px;top:571.24px;width:127px;height:22.39px;line-height:23.39px"><span>18/09/2007</span></div>
<div class="c" style="left:31px;top:593.63px;width:127px;height:22.39px;line-height:23.39px"><span>SvenOttlieb</span></div>
<div class="c" style="left:158px;top:593.63px;width:130px;height:22.39px;line-height:23.39px"><span>Sven</span></div>
<div class="c" style="left:288px;top:593.63px;width:134px;height:22.39px;line-height:23.39px"><span>Ottlieb</span></div>
<div class="c" style="left:422px;top:593.63px;width:110px;height:22.39px;line-height:23.39px"><span>Aachen</span></div>
<div class="c" style="left:532px;top:593.63px;width:90px;height:22.39px;line-height:23.39px"><span>Germany</span></div>
<div class="c r" style="left:622px;top:593.63px;width:127px;height:22.39px;line-height:23.39px"><span>12/04/2001</span></div>
<div class="c" style="left:31px;top:616.02px;width:127px;height:22.39px;line-height:23.39px"><span>JanineLabrune</span></div>
<div class="c" style="left:158px;top:616.02px;width:130px;height:22.39px;line-height:23.39px"><span>Janine</span></div>
<div class="c" style="left:288px;top:616.02px;width:134px;height:22.39px;line-height:23.39px"><span>Labrune</span></div>
<div class="c" style="left:422px;top:616.02px;width:110px;height:22.39px;line-height:23.39px"><span>Nantes</span></div>
<div class="c" style="left:532px;top:616.02px;width:90px;height:22.39px;line-height:23.39px"><span>France</span></div>
<div class="c r" style="left:622px;top:616.02px;width:127px;height:22.39px;line-height:23.39px"><span>08/12/2011</span></div>
<div class="c" style="left:31px;top:638.41px;width:127px;height:22.39px;line-height:23.39px"><span>AnnDevon</span></div>
<div class="c" style="left:158px;top:638.41px;width:130px;height:22.39px;line-height:23.39px"><span>Ann</span></div>
<div class="c" style="left:288px;top:638.41px;width:134px;height:22.39px;line-height:23.39px"><span>Devon</span></div>
<div class="c" style="left:422px;top:638.41px;width:110px;height:22.39px;line-height:23.39px"><span>London</span></div>
<div class="c" style="left:532px;top:638.41px;width:90px;height:22.39px;line-height:23.39px"><span>UK</span></div>
<div class="c r" style="left:622px;top:638.41px;width:127px;height:22.39px;line-height:23.39px"><span>20/09/2003</span></div>
<div class="c" style="left:31px;top:660.80px;width:127px;height:22.39px;line-height:23.39px"><span>RolandMendel</span></div>
<div class="c" style="left:158px;top:660.80px;width:130px;height:22.39px;line-height:23.39px"><span>Roland</span></div>
<div class="c" style="left:288px;top:660.80px;width:134px;height:22.39px;line-height:23.39px"><span>Mendel</span></div>
<div class="c" style="left:422px;top:660.80px;width:110px;height:22.39px;line-height:23.39px"><span>Graz</span></div>
<div class="c" style="left:532px;top:660.80px;width:90px;height:22.39px;line-height:23.39px"><span>Austria</span></div>
<div class="c r" style="left:622px;top:660.80px;width:127px;height:22.39px;line-height:23.39px"><span>04/11/2007</span></div>
<div class="c gh" style="left:834px;top:213.00px;width:128px;height:22.39px;line-height:23.39px"><span>Firstname</span></div>
<div class="c gh" style="left:961px;top:213.00px;width:128px;height:22.39px;line-height:23.39px"><span>Lastname</span></div>
<div class="c gh" style="left:1088px;top:213.00px;width:128px;height:22.39px;line-height:23.39px"><span>Date Registered</span></div>
<div class="c" style="left:834px;top:235.39px;width:127px;height:22.39px;line-height:23.39px"><span>Victoria</span></div>
<div class="c" style="left:961px;top:235.39px;width:127px;height:22.39px;line-height:23.39px"><span>Ashworth</span></div>
<div style="left:1215px;top:234.39px;width:45px;height:1px;background:#b0b0b0"></div>
<div style="left:749px;top:234.39px;width:85px;height:1px;background:#ababab"></div>
<div style="left:834px;top:235.39px;width:255px;height:22.99px;border:1px solid #555;border-top:none"></div>
<div style="left:961px;top:235.39px;width:1px;height:22.39px;background:#555"></div>
<div id="selbox" style="left:1087px;top:234.79px;width:129px;height:24.39px;border:2px solid #217346"></div>
<div style="left:1212px;top:254.28px;width:7px;height:7px;background:#fff"></div>
<div style="left:1213px;top:255.28px;width:5px;height:5px;background:#217346"></div>
<svg style="left:14px;top:195px" width="15" height="15" viewBox="0 0 15 15"><path d="M14 1v13h-13z" fill="#b8b8b8"/></svg>
</div>
<div id="tabbar"></div>
<div id="status"></div>
<!-- VERTICAL SCROLLBAR -->
<div style="left:1260px;top:191px;width:20px;height:480px;background:#e6e6e6"></div>
<div style="left:1263px;top:207px;width:14px;height:450px;background:#d2d2d2"></div>
<div style="left:1263px;top:193px;width:14px;height:14px;background:#fdfdfd;border:1px solid #d0d0d0"></div>
<div style="left:1263px;top:207px;width:14px;height:94px;background:#fff;border:1px solid #c4c4c4"></div>
<div style="left:1263px;top:656px;width:14px;height:14px;background:#fdfdfd;border:1px solid #d0d0d0"></div>
<svg style="left:1263px;top:193px" width="14" height="14" viewBox="0 0 14 14"><path d="M3.500 8.800l3.500-3.800 3.500 3.800z" fill="#606060"/></svg>
<svg style="left:1263px;top:656px" width="14" height="14" viewBox="0 0 14 14"><path d="M3.500 5.400l3.500 3.800 3.500-3.800z" fill="#606060"/></svg>

<!-- SHEET TABS -->
<svg style="left:20px;top:678px" width="36" height="12" viewBox="0 0 36 12"><path d="M10.500 2.500l-3.500 3.500 3.500 3.500z" fill="#c3c3c3"/><path d="M30.500 2.500l3.500 3.500-3.500 3.500z" fill="#c3c3c3"/></svg>
<div style="left:94px;top:671px;width:83px;height:22px;background:#fff;border-left:1px solid #cfcfcf;border-right:1px solid #cfcfcf"></div>
<div style="left:94px;top:692px;width:83px;height:2px;background:#217346"></div>
<div class="stab" style="left:105px;top:676.300px;letter-spacing:-0.01px">Customers</div>
<svg style="left:206px;top:676px" width="18" height="18" viewBox="0 0 18 18" fill="none" stroke="#6a6a6a" stroke-width="1.100"><circle cx="9" cy="8.500" r="6.700"/><path d="M9 5v7M5.500 8.500h7" stroke-width="1.300"/></svg>
<div style="left:767px;top:680px;width:2px;height:2px;background:#bdbdbd"></div>
<div style="left:767px;top:684px;width:2px;height:2px;background:#bdbdbd"></div>
<div style="left:767px;top:688px;width:2px;height:2px;background:#bdbdbd"></div>
<!-- HORIZONTAL SCROLLBAR -->
<div style="left:797px;top:678px;width:447px;height:14px;background:#d2d2d2"></div>
<div style="left:784px;top:678px;width:14px;height:14px;background:#fdfdfd;border:1px solid #d0d0d0"></div>
<div style="left:797px;top:678px;width:402px;height:14px;background:#fff;border:1px solid #c4c4c4"></div>
<div style="left:1244px;top:678px;width:14px;height:14px;background:#fdfdfd;border:1px solid #d0d0d0"></div>
<svg style="left:784px;top:678px" width="14" height="14" viewBox="0 0 14 14"><path d="M8.800 3.500l-3.800 3.500 3.800 3.500z" fill="#606060"/></svg>
<svg style="left:1244px;top:678px" width="14" height="14" viewBox="0 0 14 14"><path d="M5.400 3.500l3.800 3.500-3.800 3.500z" fill="#606060"/></svg>

<!-- STATUS BAR -->
<div class="st" style="left:7px;top:701px;letter-spacing:-0.29px;transform:scaleX(0.969);transform-origin:0 0">Ready</div>
<svg style="left:54px;top:700px" width="14" height="14" viewBox="0 0 14 14" fill="none"><circle cx="3.200" cy="3.200" r="2.400" fill="#8a8a8a"/><path d="M1.500 6.500h11v6.500h-11z" stroke="#8f8f8f" stroke-width="1"/><path d="M6.500 1.500h6v5" stroke="#8f8f8f"/><path d="M4 8.500v3M7 8.500v3M10 8.500v3" stroke="#a5a5a5" stroke-width="1.300"/></svg>
<div style="left:1007px;top:698px;width:35px;height:18px;background:#c8c8c8"></div>
<svg style="left:1015px;top:699px" width="94" height="16" viewBox="0 0 94 16" fill="none" stroke="#6a6a6a" stroke-width="1.100">
 <path d="M3.500 2.500h11v11h-11zM7.200 2.500v11M10.800 2.500v11M3.500 6.200h11M3.500 9.800h11"/>
 <path d="M39 2.500h11.500v11h-11.500z"/><path d="M41.500 5h6.500v6.500h-6.500zM43 7h3.500M43 9h3.500" stroke-width="1"/>
 <path d="M74.500 2.500h12v11h-12z"/><path d="M78.500 2.500v5.500h4v-5.500M74.500 8h12" stroke-width="1"/>
</svg>
<div style="left:1118px;top:706px;width:6px;height:2px;background:#555"></div>
<div style="left:1127px;top:707px;width:94px;height:1px;background:#a9a9a9"></div>
<div style="left:1176px;top:702px;width:4px;height:10px;background:#555"></div>
<div style="left:1225px;top:706px;width:7px;height:2px;background:#555"></div>
<div style="left:1228px;top:703px;width:2px;height:8px;background:#555"></div>
<div class="st" style="left:1247.500px;top:701px;letter-spacing:-0.32px;transform:scaleX(0.905);transform-origin:0 0">120%</div>
<!-- CURSOR -->
<svg style="left:1225px;top:700px" width="18" height="20" viewBox="0 0 18 20"><path d="M3 3.200v14.600l3.400-3.200 2.300 5.400h3l-2.500-5.700h4.800z" fill="#fff" stroke="#111" stroke-width="1.200" stroke-linejoin="round"/></svg>

<div id="black"></div>
</div>
</body></html>
